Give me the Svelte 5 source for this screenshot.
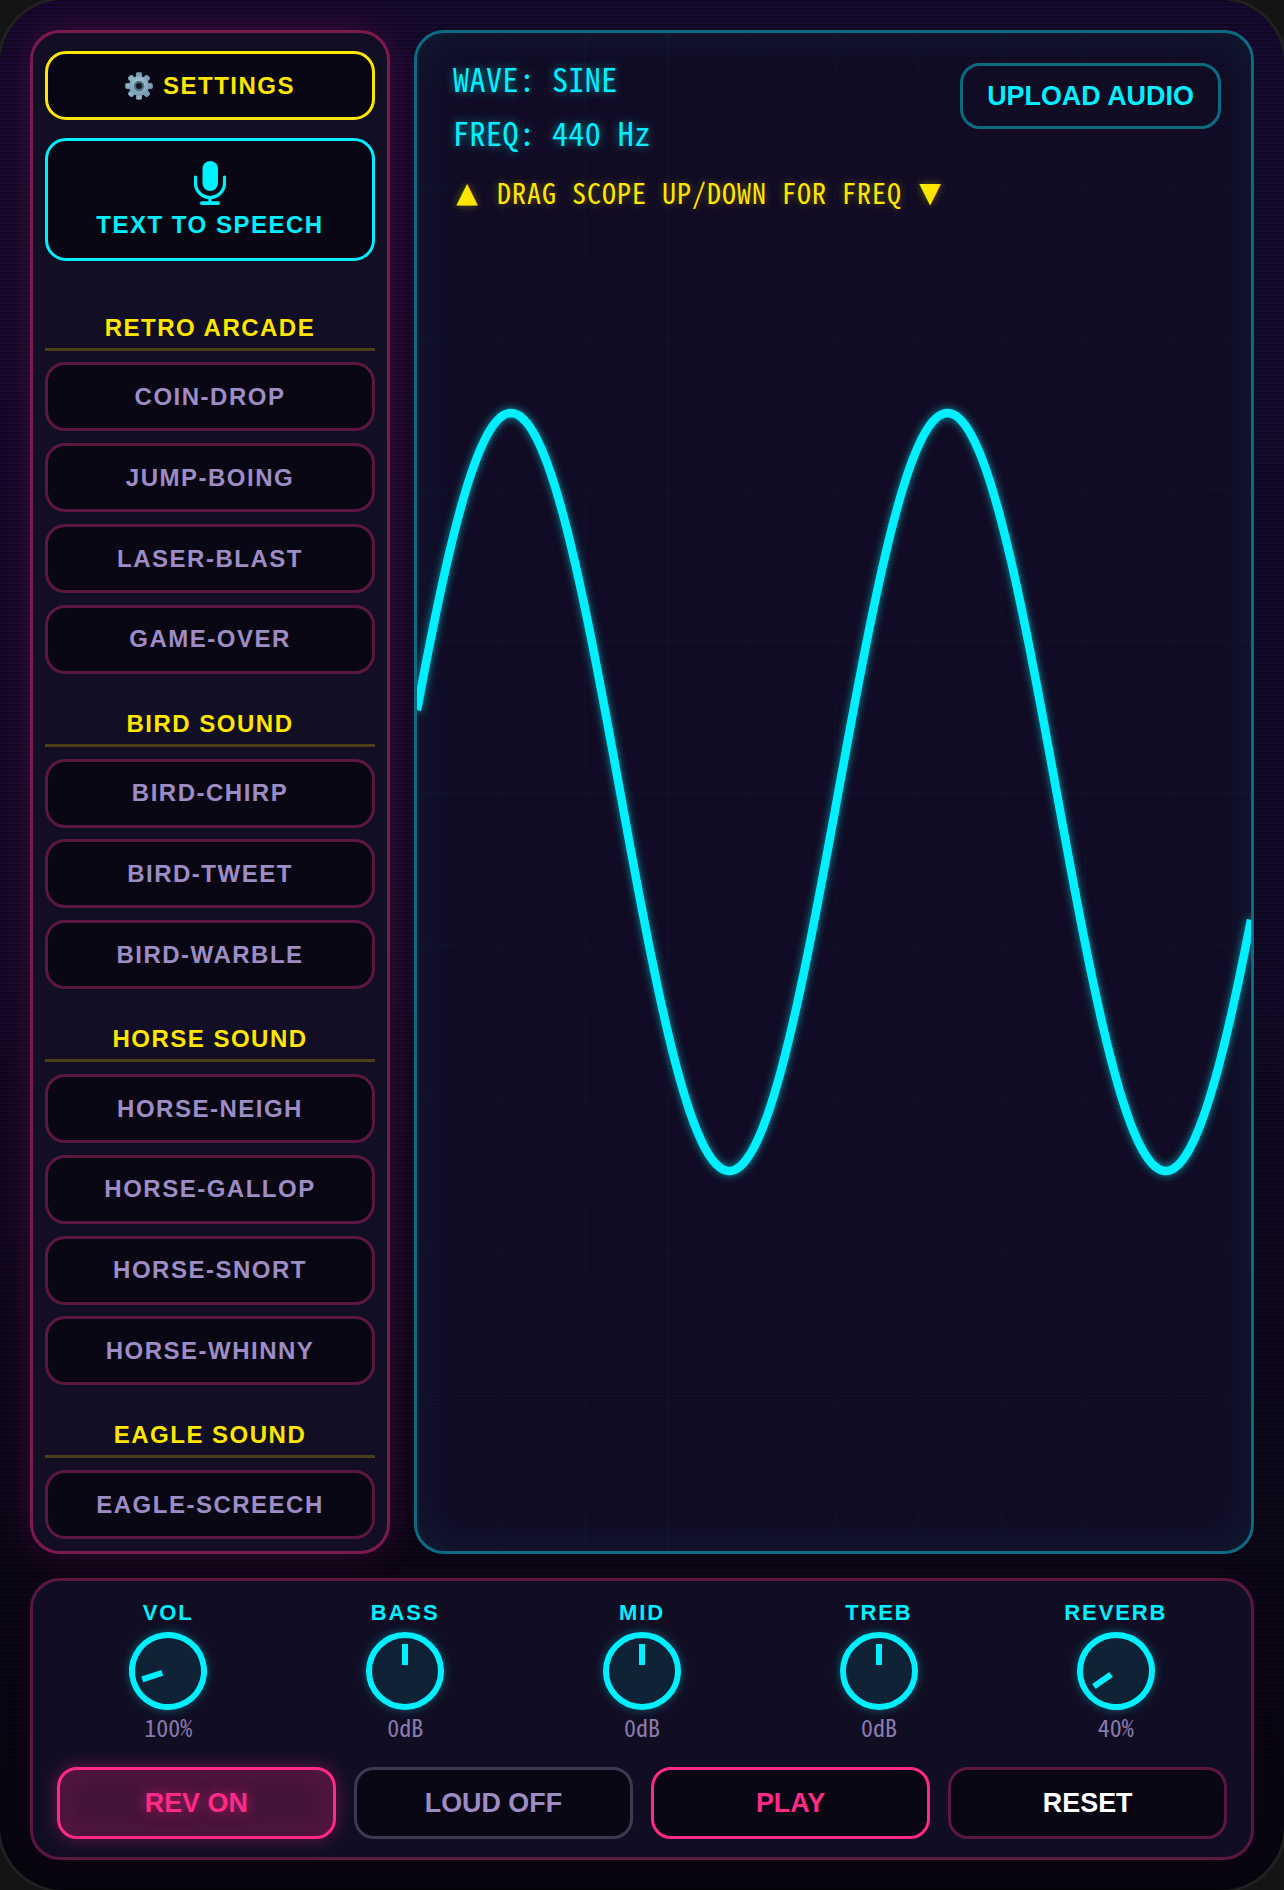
<script lang="ts">
    const groups = [
        { title: "RETRO ARCADE", sounds: ["COIN-DROP", "JUMP-BOING", "LASER-BLAST", "GAME-OVER"] },
        { title: "BIRD SOUND", sounds: ["BIRD-CHIRP", "BIRD-TWEET", "BIRD-WARBLE"] },
        { title: "HORSE SOUND", sounds: ["HORSE-NEIGH", "HORSE-GALLOP", "HORSE-SNORT", "HORSE-WHINNY"] },
        { title: "EAGLE SOUND", sounds: ["EAGLE-SCREECH"] }
    ];

    const knobs = [
        { label: "VOL", value: "100%", angle: -108 },
        { label: "BASS", value: "0dB", angle: 0 },
        { label: "MID", value: "0dB", angle: 0 },
        { label: "TREB", value: "0dB", angle: 0 },
        { label: "REVERB", value: "40%", angle: -125 }
    ];

    const actions = [
        { label: "REV ON", kind: "on" },
        { label: "LOUD OFF", kind: "off" },
        { label: "PLAY", kind: "play" },
        { label: "RESET", kind: "reset" }
    ];

    // scope canvas is 834 wide, 1518 tall, peak at x=94, period 436.5
    const wavePoints: string[] = [];
    for (let x = 0; x <= 834; x += 3) {
        const y = 759 - 379 * Math.sin(((x - 94) / 436.5) * Math.PI * 2 + Math.PI / 2);
        wavePoints.push(`${x},${y.toFixed(1)}`);
    }
    const wave = wavePoints.join(" ");
    const teeth = [0, 45, 90, 135, 180, 225, 270, 315];
</script>

<div class="device">
    <aside class="sidebar">
        <button class="settings">
            <svg class="gear" viewBox="0 0 28 28" width="28" height="28" aria-hidden="true">
                <defs>
                    <radialGradient id="gearFill" cx="50%" cy="35%" r="70%">
                        <stop offset="0%" stop-color="#a9c8d6" />
                        <stop offset="100%" stop-color="#6f97ab" />
                    </radialGradient>
                </defs>
                {#each teeth as t}
                    <rect x="11.2" y="0.5" width="5.6" height="27" rx="1.2" fill="url(#gearFill)" transform="rotate({t} 14 14)" />
                {/each}
                <circle cx="14" cy="14" r="10" fill="url(#gearFill)" />
                <circle cx="14" cy="14" r="5.2" fill="#4c6b7c" />
                <circle cx="14" cy="14" r="3" fill="#15151f" />
            </svg>
            <span>SETTINGS</span>
        </button>

        <button class="tts">
            <svg viewBox="0 0 32 44" width="32" height="44" aria-hidden="true">
                <rect x="8.5" y="0" width="15.5" height="30" rx="7.7" fill="currentColor" />
                <path d="M1.5 16v6a14.5 14.5 0 0 0 29 0v-6" fill="none" stroke="currentColor" stroke-width="3.2" stroke-linecap="round" />
                <rect x="14.4" y="36" width="3.2" height="6" fill="currentColor" />
                <rect x="6" y="40.2" width="20" height="3.8" rx="1.9" fill="currentColor" />
            </svg>
            <span>TEXT TO SPEECH</span>
        </button>

        <div class="groups">
            {#each groups as group}
                <section class="group">
                    <h3>{group.title}</h3>
                    {#each group.sounds as sound}
                        <button class="sound">{sound}</button>
                    {/each}
                </section>
            {/each}
        </div>
    </aside>

    <main class="scope">
        <svg class="wave" viewBox="0 0 834 1518" aria-hidden="true">
            <polyline points={wave} />
        </svg>
        <div class="hud">
            <div class="readout">
                <div class="line">WAVE: SINE</div>
                <div class="line">FREQ: 440 Hz</div>
                <div class="hint"><span class="tri">▲</span> DRAG SCOPE UP/DOWN FOR FREQ <span class="tri down">▼</span></div>
            </div>
            <button class="upload">UPLOAD AUDIO</button>
        </div>
    </main>

    <footer class="controls">
        <div class="knobs">
            {#each knobs as knob}
                <div class="knob-cell">
                    <div class="knob-label">{knob.label}</div>
                    <div class="knob" style="transform: rotate({knob.angle}deg)"><i></i></div>
                    <div class="knob-value">{knob.value}</div>
                </div>
            {/each}
        </div>
        <div class="actions">
            {#each actions as action}
                <button class="action {action.kind}">{action.label}</button>
            {/each}
        </div>
    </footer>
</div>

<style>
    :global(body) { background: #141414; overflow: hidden; }
    button { font-family: inherit; font-weight: 700; cursor: pointer; box-sizing: border-box; }

    .device {
        width: 1284px; height: 1890px; box-sizing: border-box; padding: 30px;
        border-radius: 64px; box-shadow: 0 0 0 3px #212121;
        background:
            repeating-linear-gradient(180deg, rgba(0, 0, 0, 0.28) 0 2px, transparent 2px 4px),
            linear-gradient(180deg, #170a32 0%, #140a2a 50%, #07050f 100%);
        display: grid; grid-template-columns: 360px 840px; grid-template-rows: 1524px 282px; gap: 24px;
        font-family: "Liberation Sans", Arial, sans-serif;
    }

    .sidebar {
        box-sizing: border-box; border: 3px solid #7a1a4e; border-radius: 30px; padding: 18px 12px 12px;
        background: #120f25; box-shadow: 0 0 34px rgba(255, 30, 130, 0.18);
        display: flex; flex-direction: column; overflow: hidden;
    }
    .settings {
        height: 69px; border: 3px solid #ffe600; border-radius: 21px; background: #0a0714; color: #ffe600;
        font-size: 24px; letter-spacing: 1.5px; display: flex; align-items: center; justify-content: center; gap: 10px;
        flex-shrink: 0;
    }
    .tts {
        height: 123px; margin-top: 18px; border: 3px solid #00f0ff; border-radius: 21px; background: #0a0714; color: #00f0ff;
        font-size: 24px; letter-spacing: 1.5px; display: flex; flex-direction: column; align-items: center; justify-content: flex-start;
        padding-top: 20px; gap: 6px; flex-shrink: 0;
    }
    .tts span { line-height: 28px; }

    .groups { margin-top: 17px; }
    .group { display: flex; flex-direction: column; gap: 11.8px; margin-top: 36px; }
    .group:first-child { margin-top: 35.7px; }
    .group h3 {
        margin: 0; padding-bottom: 6px; height: 28px; line-height: 28px; text-align: center; box-sizing: content-box;
        font-size: 24px; font-weight: 700; letter-spacing: 1.5px; color: #ffe600; border-bottom: 3px solid #4a3f18;
    }
    .sound {
        height: 69px; border: 3px solid #5a1740; border-radius: 20px; background: #0a0714; color: #9d8dc4;
        font-size: 24px; letter-spacing: 1.5px; flex-shrink: 0;
    }

    .scope {
        position: relative; box-sizing: border-box; border: 3px solid #0c6b80; border-radius: 30px; overflow: hidden;
        background:
            linear-gradient(rgba(0, 240, 255, 0.016) 1.5px, transparent 1.5px) 0 0 / 83.4px 151.8px,
            linear-gradient(90deg, rgba(0, 240, 255, 0.016) 1.5px, transparent 1.5px) 0 0 / 83.4px 151.8px,
            repeating-linear-gradient(180deg, rgba(0, 0, 0, 0.1) 0 2px, transparent 2px 4px),
            #120c26;
        box-shadow: inset 0 0 48px rgba(0, 240, 255, 0.08);
    }
    .wave { position: absolute; inset: 0; width: 834px; height: 1518px; }
    .wave polyline {
        fill: none; stroke: #00f0ff; stroke-width: 8.5; stroke-linejoin: round;
        filter: drop-shadow(0 0 4px rgba(0, 240, 255, 0.6));
    }
    .hud { position: relative; display: flex; justify-content: space-between; align-items: flex-start; padding: 30px 30px 0 36px; }
    .readout { font-family: "Noto Sans Mono CJK SC", "Noto Sans CJK SC", monospace; }
    .line {
        font-size: 32px; letter-spacing: 0.48px; line-height: 54px; color: #00f0ff;
        text-shadow: 0 0 10px rgba(0, 240, 255, 0.55); white-space: pre;
    }
    .line:first-child { margin-top: -12px; }
    .hint {
        margin-top: 13px; height: 40px; font-size: 28px; letter-spacing: 1px; line-height: 40px; color: #ffe600;
        text-shadow: 0 0 8px rgba(255, 230, 0, 0.35); white-space: pre;
    }
    .tri { display: inline-block; width: 28px; margin-right: 1px; text-align: center; letter-spacing: 0; font-family: "DejaVu Sans", sans-serif; vertical-align: 2px; }
    .tri.down { margin-left: -1px; }
    .upload {
        width: 261px; height: 66px; border: 3px solid #0c6b80; border-radius: 20px; background: #100c24; color: #00f0ff;
        font-size: 26.9px; padding: 0;
    }

    .controls {
        grid-column: 1 / 3; box-sizing: border-box; border: 3px solid #5a1740; border-radius: 30px; background: #110e24;
        padding: 19px 24px 0 24px; box-shadow: 0 0 30px rgba(255, 30, 130, 0.05);
    }
    .knobs { display: grid; grid-template-columns: repeat(5, 236.9px); margin-left: -7.2px; }
    .knob-cell { display: flex; flex-direction: column; align-items: center; }
    .knob-label { font-size: 22px; font-weight: 700; letter-spacing: 1.9px; line-height: 26px; color: #00f0ff; }
    .knob {
        position: relative; margin-top: 6px; width: 78px; height: 78px; box-sizing: border-box; border: 6px solid #00f0ff; border-radius: 50%;
        background: #0f2236; box-shadow: 0 0 10px rgba(0, 240, 255, 0.35);
    }
    .knob i { position: absolute; left: 30px; top: 6px; width: 6px; height: 21px; background: #00f0ff; }
    .knob-value {
        margin-top: 3px; font-family: "Noto Sans Mono CJK SC", "Noto Sans CJK SC", monospace; font-size: 24px; line-height: 28px; color: #8a7aac;
    }
    .actions { display: grid; grid-template-columns: repeat(4, 1fr); gap: 18.5px; margin-top: 26px; }
    .action { height: 72px; border-radius: 20px; border: 3px solid; background: #0a0714; font-size: 26.9px; padding: 0; }
    .action.on {
        border-color: #ff2a85; color: #ff2a85; background: #45143a;
        box-shadow: 0 0 18px rgba(255, 42, 133, 0.35), inset 0 0 30px rgba(255, 42, 133, 0.12);
        text-shadow: 0 0 14px rgba(255, 42, 133, 0.6);
    }
    .action.off { border-color: #3e3850; color: #9d8dc4; }
    .action.play { border-color: #ff2a85; color: #ff2a85; }
    .action.reset { border-color: #5a1740; color: #fff; }
</style>
